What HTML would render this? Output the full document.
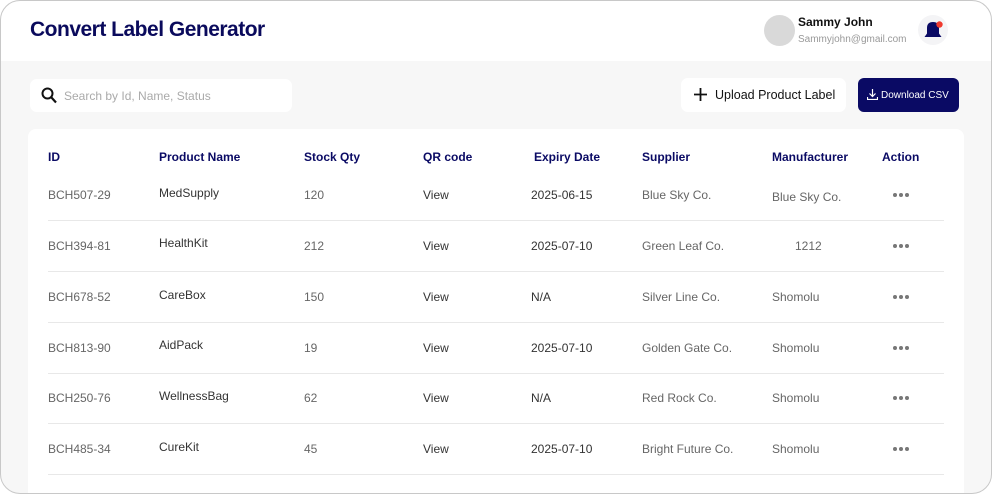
<!DOCTYPE html>
<html><head><style>
*{margin:0;padding:0;box-sizing:border-box}
body{width:992px;height:494px;background:#fff;font-family:"Liberation Sans",sans-serif;overflow:hidden;position:relative}
.frame{position:absolute;left:0;top:0;width:992px;height:494px;border-radius:20px;overflow:hidden;background:#f7f7f7}
.border{position:absolute;left:0;top:0;width:992px;height:494px;border:1px solid #c8c8c8;border-radius:20px;z-index:5}
.hdr{position:absolute;left:0;top:0;width:100%;height:61px;background:#fff}
.title{position:absolute;left:30px;top:18px;font-size:21px;font-weight:bold;color:#0a0a5c;letter-spacing:-0.5px}
.av{position:absolute;left:764px;top:15px;width:31px;height:31px;border-radius:50%;background:#d9d9d9}
.nm{position:absolute;left:798px;top:15px;font-size:12px;font-weight:bold;color:#111}
.em{position:absolute;left:798px;top:34px;font-size:10px;color:#999}
.bell{position:absolute;left:918px;top:15px;width:30px;height:30px;border-radius:50%;background:#f4f4f6}
.search{position:absolute;left:30px;top:79px;width:262px;height:33px;background:#fff;border-radius:7px}
.search span{position:absolute;left:34px;top:10px;font-size:12px;color:#aaa}
.up{position:absolute;left:681px;top:78px;width:165px;height:34px;background:#fff;border-radius:7px;font-size:12.5px;color:#111}
.dl{position:absolute;left:858px;top:78px;width:101px;height:34px;background:#0a0a64;border-radius:6px;color:#fff;font-size:10px}
.card{position:absolute;left:28px;top:129px;width:936px;height:380px;background:#fff;border-radius:8px}
.c{position:absolute;font-size:12px;color:#666}
.h{position:absolute;font-size:12px;font-weight:bold;color:#0a0a64;top:150px}
.line{position:absolute;left:48px;width:896px;height:1px;background:#e8e8e8}
.dots{position:absolute;width:16px;height:4px}
.dots i{position:absolute;top:0;width:4px;height:4px;border-radius:50%;background:#777}
</style></head><body><div class="frame">
<div class="hdr">
<div class="title">Convert Label Generator</div>
<div class="av"></div>
<div class="nm">Sammy John</div>
<div class="em">Sammyjohn@gmail.com</div>
<div class="bell"><svg width="30" height="30" viewBox="0 0 30 30"><path d="M6.5 22 L9 18.5 L9 13 Q9 7 15 7 Q21 7 21 13 L21 18.5 L23.5 22 Z" fill="#0a0a64"/><circle cx="21.5" cy="9.5" r="3.2" fill="#f03a2e"/></svg></div>
</div>
<div class="search"><svg style="position:absolute;left:11px;top:8px" width="16" height="17" viewBox="0 0 16 17"><circle cx="6.5" cy="6.5" r="5" fill="none" stroke="#111" stroke-width="2"/><path d="M10 10 L15 15.5" stroke="#111" stroke-width="2.2"/></svg><span>Search by Id, Name, Status</span></div>
<div class="up"><svg style="position:absolute;left:13px;top:10px" width="13" height="13"><path d="M6.5 0V13M0 6.5H13" stroke="#111" stroke-width="1.8"/></svg><span style="position:absolute;left:34px;top:10px">Upload Product Label</span></div>
<div class="dl"><svg style="position:absolute;left:9px;top:11px" width="11" height="11" viewBox="0 0 11 11"><path d="M5.5 0V7M2.5 4.5L5.5 7.5L8.5 4.5M0.5 8V10.5H10.5V8" fill="none" stroke="#fff" stroke-width="1.2"/></svg><span style="position:absolute;left:23px;top:12px">Download CSV</span></div>
<div class="card"></div>
<div class="h" style="left:48px">ID</div><div class="h" style="left:159px">Product Name</div><div class="h" style="left:304px">Stock Qty</div><div class="h" style="left:423px">QR code</div><div class="h" style="left:534px">Expiry Date</div><div class="h" style="left:642px">Supplier</div><div class="h" style="left:772px">Manufacturer</div><div class="h" style="left:882px">Action</div>
<div class="c" style="left:48px;top:188px">BCH507-29</div><div class="c" style="left:159px;top:186px;color:#333">MedSupply</div><div class="c" style="left:304px;top:188px">120</div><div class="c" style="left:423px;top:188px;color:#333">View</div><div class="c" style="left:531px;top:188px;color:#333">2025-06-15</div><div class="c" style="left:642px;top:188px">Blue Sky Co.</div><div class="c" style="left:772px;top:190px">Blue Sky Co.</div><div class="dots" style="left:893px;top:193px"><i style="left:0"></i><i style="left:6px"></i><i style="left:12px"></i></div>
<div class="line" style="top:220px"></div>
<div class="c" style="left:48px;top:239px">BCH394-81</div><div class="c" style="left:159px;top:236px;color:#333">HealthKit</div><div class="c" style="left:304px;top:239px">212</div><div class="c" style="left:423px;top:239px;color:#333">View</div><div class="c" style="left:531px;top:239px;color:#333">2025-07-10</div><div class="c" style="left:642px;top:239px">Green Leaf Co.</div><div class="c" style="left:795px;top:239px">1212</div><div class="dots" style="left:893px;top:244px"><i style="left:0"></i><i style="left:6px"></i><i style="left:12px"></i></div>
<div class="line" style="top:271px"></div>
<div class="c" style="left:48px;top:290px">BCH678-52</div><div class="c" style="left:159px;top:288px;color:#333">CareBox</div><div class="c" style="left:304px;top:290px">150</div><div class="c" style="left:423px;top:290px;color:#333">View</div><div class="c" style="left:531px;top:290px;color:#333">N/A</div><div class="c" style="left:642px;top:290px">Silver Line Co.</div><div class="c" style="left:772px;top:290px">Shomolu</div><div class="dots" style="left:893px;top:295px"><i style="left:0"></i><i style="left:6px"></i><i style="left:12px"></i></div>
<div class="line" style="top:322px"></div>
<div class="c" style="left:48px;top:341px">BCH813-90</div><div class="c" style="left:159px;top:338px;color:#333">AidPack</div><div class="c" style="left:304px;top:341px">19</div><div class="c" style="left:423px;top:341px;color:#333">View</div><div class="c" style="left:531px;top:341px;color:#333">2025-07-10</div><div class="c" style="left:642px;top:341px">Golden Gate Co.</div><div class="c" style="left:772px;top:341px">Shomolu</div><div class="dots" style="left:893px;top:346px"><i style="left:0"></i><i style="left:6px"></i><i style="left:12px"></i></div>
<div class="line" style="top:373px"></div>
<div class="c" style="left:48px;top:391px">BCH250-76</div><div class="c" style="left:159px;top:389px;color:#333">WellnessBag</div><div class="c" style="left:304px;top:391px">62</div><div class="c" style="left:423px;top:391px;color:#333">View</div><div class="c" style="left:531px;top:391px;color:#333">N/A</div><div class="c" style="left:642px;top:391px">Red Rock Co.</div><div class="c" style="left:772px;top:391px">Shomolu</div><div class="dots" style="left:893px;top:396px"><i style="left:0"></i><i style="left:6px"></i><i style="left:12px"></i></div>
<div class="line" style="top:423px"></div>
<div class="c" style="left:48px;top:442px">BCH485-34</div><div class="c" style="left:159px;top:440px;color:#333">CureKit</div><div class="c" style="left:304px;top:442px">45</div><div class="c" style="left:423px;top:442px;color:#333">View</div><div class="c" style="left:531px;top:442px;color:#333">2025-07-10</div><div class="c" style="left:642px;top:442px">Bright Future Co.</div><div class="c" style="left:772px;top:442px">Shomolu</div><div class="dots" style="left:893px;top:447px"><i style="left:0"></i><i style="left:6px"></i><i style="left:12px"></i></div>
<div class="line" style="top:474px"></div>
</div><div class="border"></div></body></html>
